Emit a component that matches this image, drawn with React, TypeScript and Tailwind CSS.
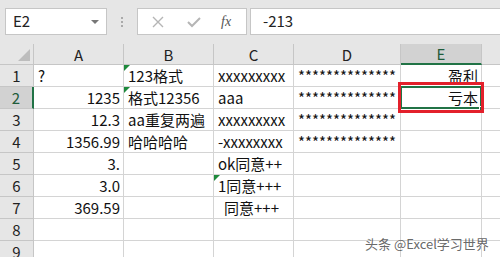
import React from "react";

const FONT = { fontFamily: '"Noto Sans CJK SC", "Noto Sans", sans-serif' };

type Cell = { t?: string; align?: "l" | "r"; tri?: boolean; pad?: string };

const rows: Cell[][] = [
  [{ t: "?", align: "l" }, { t: "123格式", tri: true }, { t: "xxxxxxxxx" }, { t: "**************" }, { t: "盈利", align: "r" }],
  [{ t: "1235", align: "r" }, { t: "格式12356", tri: true }, { t: "aaa" }, { t: "**************" }, { t: "亏本", align: "r" }],
  [{ t: "12.3", align: "r" }, { t: "aa重复两遍" }, { t: "xxxxxxxxx" }, { t: "**************" }, {}],
  [{ t: "1356.99", align: "r" }, { t: "哈哈哈哈" }, { t: "-xxxxxxxx" }, { t: "**************" }, {}],
  [{ t: "3.", align: "r" }, {}, { t: "ok同意++" }, {}, {}],
  [{ t: "3.0", align: "r" }, {}, { t: "1同意+++", tri: true }, {}, {}],
  [{ t: "369.59", align: "r" }, {}, { t: "同意+++", pad: "pl-[10px]" }, {}, {}],
  [{}, {}, {}, {}, {}],
  [{}, {}, {}, {}, {}],
];

const cols = ["A", "B", "C", "D", "E"];

export default function App() {
  return (
    <div className="w-[500px] h-[257px] overflow-hidden bg-white relative text-[#111]" style={FONT}>
      {/* formula bar */}
      <div className="h-[44px] bg-[#e6e6e6] flex items-start pt-[8px] pl-[5px]">
        <div className="w-[102px] h-[27px] bg-white border border-[#c6c6c6] flex items-center justify-between pl-[7px] pr-[6px]">
          <span className="text-[15px] text-[#222]">E2</span>
          <span className="w-0 h-0 border-l-[4px] border-r-[4px] border-t-[4px] border-l-transparent border-r-transparent border-t-[#777] mr-[1px]" />
        </div>
        <div className="w-[30px] h-[27px] flex flex-col items-center justify-center gap-[2px]">
          <span className="w-[2px] h-[2px] bg-[#aaa]" />
          <span className="w-[2px] h-[2px] bg-[#aaa]" />
          <span className="w-[2px] h-[2px] bg-[#aaa]" />
        </div>
        <div className="w-[110px] h-[27px] bg-white border border-[#c6c6c6] flex items-center">
          <svg width="12" height="12" viewBox="0 0 12 12" className="ml-[14px]">
            <path d="M1 1 L11 11 M11 1 L1 11" stroke="#b5b5b5" strokeWidth="1.4" fill="none" />
          </svg>
          <svg width="14" height="12" viewBox="0 0 14 12" className="ml-[23px]">
            <path d="M1 6 L5 10 L13 2" stroke="#b5b5b5" strokeWidth="2" fill="none" />
          </svg>
          <span
            className="ml-[20px] text-[14px] italic text-[#555]"
            style={{ fontFamily: '"Liberation Serif", serif' }}
          >
            fx
          </span>
        </div>
        <div className="ml-[3px] flex-1 h-[27px] bg-white border border-[#c6c6c6] border-r-0 flex items-center pl-[12px]">
          <span className="text-[15px] text-[#222]">-213</span>
        </div>
      </div>

      {/* grid */}
      <div className="grid grid-cols-[34px_90px_90px_80px_107px_81px_1fr] text-[15px] leading-none">
        {/* header row */}
        <div className="h-[21px] bg-[#e6e6e6] border-r border-b border-[#c6c6c6] relative">
          <span className="absolute right-[3px] bottom-[3px] w-0 h-0 border-l-[12px] border-t-[12px] border-l-transparent border-t-transparent border-b-0 border-r-0"
            style={{ borderRight: "12px solid #bdbdbd", borderTop: "12px solid transparent", borderLeft: "0", width: 0, height: 0 }} />
        </div>
        {cols.map((c) => (
          <div
            key={c}
            className={
              c === "E"
                ? "h-[21px] bg-[#d2d2d2] border-r border-[#c6c6c6] border-b-2 border-b-[#217346] flex items-center justify-center text-[#1f5c3a]"
                : "h-[21px] bg-[#e6e6e6] border-r border-b border-[#c6c6c6] flex items-center justify-center text-[#222]"
            }
          >
            {c}
          </div>
        ))}
        <div className="h-[21px] bg-[#e6e6e6] border-b border-[#c6c6c6]" />

        {rows.map((r, i) => (
          <React.Fragment key={i}>
            <div
              className={
                i === 1
                  ? "h-[22px] bg-[#d2d2d2] border-r-2 border-r-[#217346] border-b border-b-[#c6c6c6] flex items-center justify-center text-[#1f5c3a]"
                  : "h-[22px] bg-[#e6e6e6] border-r border-b border-[#c6c6c6] flex items-center justify-center text-[#222]"
              }
            >
              {i + 1}
            </div>
            {r.map((cell, j) => {
              const selected = i === 1 && j === 4;
              return (
                <div
                  key={j}
                  className={
                    "h-[22px] border-r border-b border-[#d4d4d4] relative flex items-center whitespace-nowrap overflow-visible " +
                    (cell.align === "r" ? "justify-end pr-[3px] " : "justify-start pl-[4px] ") +
                    (cell.pad ?? "")
                  }
                >
                  {cell.tri && (
                    <span
                      className="absolute left-0 top-0 w-0 h-0"
                      style={{ borderTop: "6px solid #1e8a3c", borderRight: "6px solid transparent" }}
                    />
                  )}
                  {cell.t && <span className="relative">{cell.t}</span>}
                  {selected && (
                    <>
                      <span className="absolute left-[-1px] top-[-1px] right-[-1px] bottom-[-1px] border-2 border-[#217346]" />
                      <span className="absolute right-[-3px] bottom-[-3px] w-[5px] h-[5px] bg-[#217346] border border-white" />
                    </>
                  )}
                </div>
              );
            })}
            <div className="h-[22px] border-b border-[#d4d4d4]" />
          </React.Fragment>
        ))}
      </div>

      {/* red highlight rectangle */}
      <div className="absolute left-[398px] top-[82px] w-[86px] h-[31px] border-[3px] border-[#e3202b]" />

      {/* watermark */}
      <div className="absolute left-[365px] top-[234px] text-[13px] text-[#555]/90" style={{ fontFamily: '"Noto Sans CJK SC", sans-serif' }}>
        头条 @Excel学习世界
      </div>
    </div>
  );
}
